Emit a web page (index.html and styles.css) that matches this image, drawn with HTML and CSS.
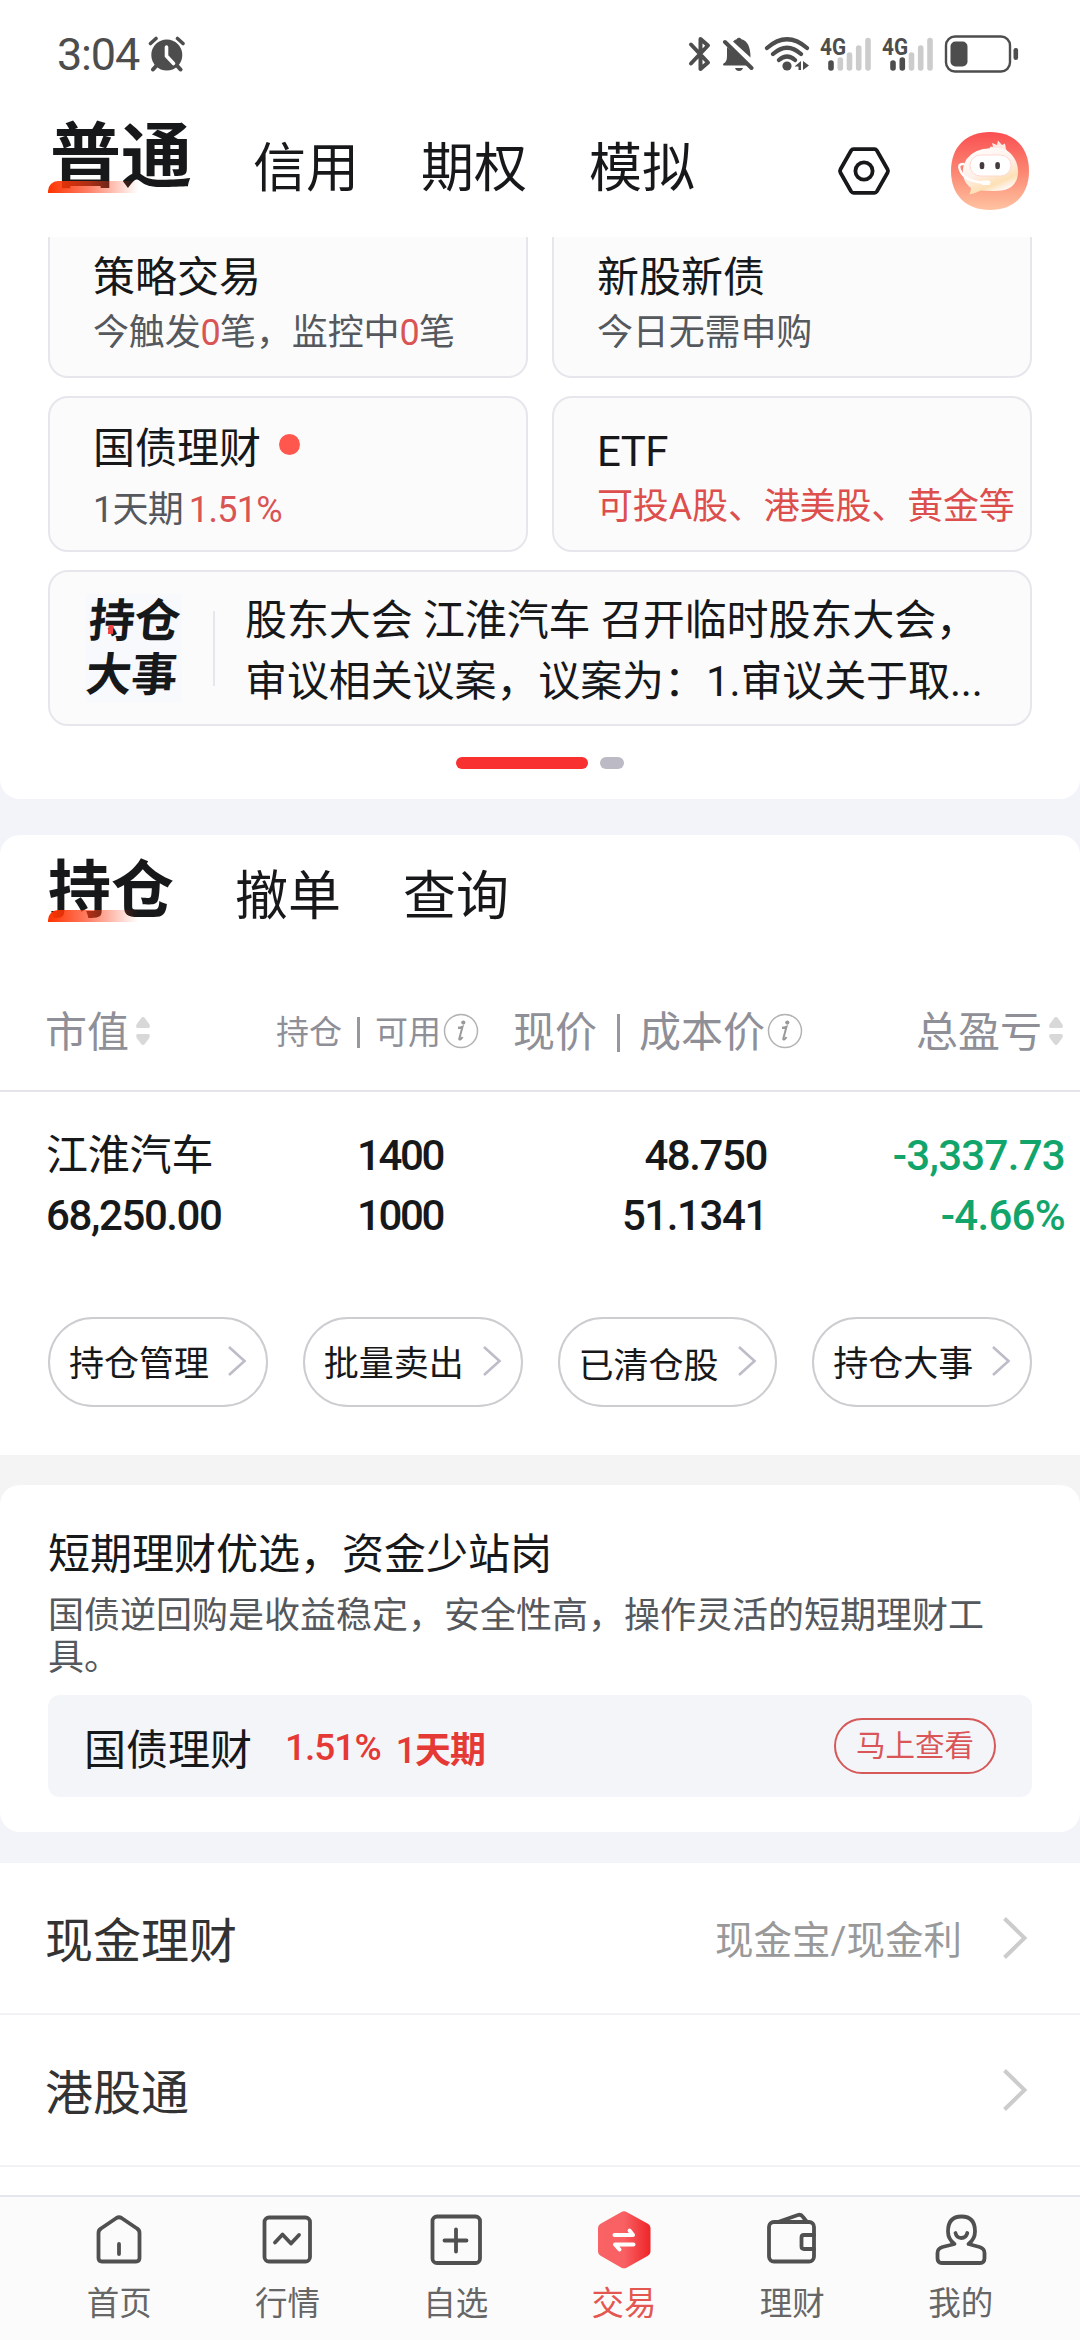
FILE: index.html
```html
<!DOCTYPE html>
<html lang="zh-CN">
<head>
<meta charset="utf-8">
<title>交易</title>
<link rel="stylesheet" href="styles.css">
</head>
<body>
<svg class="defs" width="0" height="0" aria-hidden="true">
  <defs>
    <symbol id="chevron" viewBox="0 0 20 30"><path d="M2 1 17.500 15 2 29" fill="none" stroke="currentColor" stroke-width="2.600"/></symbol>
    <symbol id="chevron-lg" viewBox="0 0 26 42"><path d="M2.500 1.500 22.500 21 2.500 40.500" fill="none" stroke="currentColor" stroke-width="4"/></symbol>
    <symbol id="sort" viewBox="0 0 14 28"><path d="M7 0Q8 0 9 1.200L13.200 7Q15 11 12 11H2Q-1 11 .8 7L5 1.200Q6 0 7 0ZM7 28Q8 28 9 26.800L13.200 21Q15 17 12 17H2Q-1 17 .8 21L5 26.800Q6 28 7 28Z" fill="#d8d8d8"/></symbol>
    <symbol id="info" viewBox="0 0 36 36"><circle cx="18" cy="18" r="16.500" fill="none" stroke="#b3b3b3" stroke-width="1.500"/><circle cx="20.300" cy="9.600" r="2.100" fill="#999"/><path d="M15 14.800Q17.500 14.600 19.500 13.700L16.300 25.600Q16.100 27 17.400 26.300 18.600 25.500 19.500 24M15.200 14.900H18" fill="none" stroke="#999" stroke-width="2"/></symbol>
  </defs>
</svg>

<header class="top">
  <div class="status">
    <span class="time">3:04</span>
    <svg class="alarm" width="38" height="36" viewBox="0 0 38 36"><g fill="none" stroke="#4d4d4d" stroke-linecap="round"><path d="M2.500 7.500 8 2.500M29.500 2.500 35 7.500" stroke-width="3.600"/><path d="m9 29-4 4.500M28.500 29l4 4.500" stroke-width="4"/></g><circle cx="18.800" cy="19" r="15.500" fill="#4d4d4d"/><path d="M18.500 11v9l7 7.500" fill="none" stroke="#fff" stroke-width="3.600" stroke-linecap="round"/></svg>
    <div class="status-icons">
      <svg width="24" height="38" viewBox="0 0 24 38"><path d="M3 9.500 20 27.500 12.500 34V4L20 10.500 3 28.500" fill="none" stroke="#4d4d4d" stroke-width="4" stroke-linecap="round" stroke-linejoin="round"/></svg>
      <svg width="32" height="38" viewBox="0 0 32 38"><path d="M5 12 27 30.500H3Q0 30.500 1.500 28.500 5 27 5 21ZM11 6.500Q13 4.500 14.500 4.200 17 1.500 19.500 4.200 28.500 6.500 28.500 22.500ZM13 33H21Q20 36 17 36T13 33Z" fill="#4d4d4d"/><path d="M3 7 29.500 33" stroke="#4d4d4d" stroke-width="4" stroke-linecap="round"/></svg>
      <svg width="46" height="38" viewBox="0 0 46 38"><g fill="none" stroke="#4d4d4d" stroke-width="4.200" stroke-linecap="round"><path d="M3 13Q23-4.500 43 13M9 19Q23 6.500 37 19M15 25Q23 18 31 25"/></g><circle cx="23" cy="31" r="4.600" fill="#4d4d4d"/><path d="M37 26v9h-2.500v-3.500H30.500ZM39 26v9l6-4.500Z" fill="#4d4d4d"/></svg>
      <svg width="52" height="38" viewBox="0 0 52 38"><text class="net" x="0" y="19.500" textLength="26" lengthAdjust="spacingAndGlyphs">4G</text><g stroke-width="5.600" stroke-linecap="round"><path d="M11 28v5" stroke="#4d4d4d"/><path d="M20.300 25v8M29.500 20v13M38.700 13v20M48 5.500V33" stroke="#ccc"/></g></svg>
      <svg width="52" height="38" viewBox="0 0 52 38"><text class="net" x="0" y="19.500" textLength="26" lengthAdjust="spacingAndGlyphs">4G</text><g stroke-width="5.600" stroke-linecap="round"><path d="M11 28v5M20.300 25v8" stroke="#4d4d4d"/><path d="M29.500 20v13M38.700 13v20M48 5.500V33" stroke="#ccc"/></g></svg>
      <svg width="75" height="38" viewBox="0 0 75 38"><rect x="2" y="1.500" width="64" height="35" rx="9" fill="none" stroke="#4d4d4d" stroke-width="2.400"/><rect x="6.500" y="6.500" width="17" height="25" rx="5" fill="#4d4d4d"/><rect x="69.500" y="13" width="4.600" height="12" rx="2.300" fill="#4d4d4d"/></svg>
    </div>
  </div>
  <nav class="modes">
    <span class="mode active">普通</span>
    <span class="mode">信用</span>
    <span class="mode">期权</span>
    <span class="mode">模拟</span>
    <div class="tools">
      <svg width="54" height="50" viewBox="0 0 54 50"><path d="M16.500 3.200H37.500Q39 3.200 40 4.700L50.500 23.300Q51.500 25 50.500 26.700L40 45.300Q39 46.800 37.500 46.800H16.500Q15 46.800 14 45.300L3.500 26.700Q2.500 25 3.500 23.300L14 4.700Q15 3.200 16.500 3.200Z" fill="none" stroke="#17181a" stroke-width="3.800"/><circle cx="27" cy="25" r="8.600" fill="none" stroke="#17181a" stroke-width="3.800"/></svg>
      <svg width="78" height="78" viewBox="0 0 78 78">
        <defs>
          <linearGradient id="av" x1="0" y1="0" x2="0" y2="1"><stop offset="0" stop-color="#fa4f52"/><stop offset=".5" stop-color="#fb8571"/><stop offset="1" stop-color="#ffc3a1"/></linearGradient>
          <linearGradient id="hd" x1="0" y1="0" x2=".5" y2="1"><stop offset="0" stop-color="#fff"/><stop offset=".55" stop-color="#fff0ea"/><stop offset=".85" stop-color="#fde0b5"/><stop offset="1" stop-color="#fff6f0"/></linearGradient>
        </defs>
        <path d="M39 0C63 0 78 15 78 39S63 78 39 78 0 63 0 39 15 0 39 0Z" fill="url(#av)"/>
        <path d="M39 18Q38 13 42 15L41 11 46 13 47 8.500 51 13 54 11.500 55 17 58 22Z" fill="#ffe7e4"/>
        <path d="M32 17C45 15 55 15 61 23C67 30 69 41 65 49C60 59 50 59 40 59L30 58.500Q25 61 18.500 62.500 20 59.500 20 56C13 51 10 42 13 32Q18 20 32 17Z" fill="url(#hd)"/>
        <rect x="19" y="23" width="41" height="21" rx="10.500" fill="#fff" stroke="#ffd9d2"/>
        <rect x="28.700" y="30" width="4.600" height="7.200" rx="2.300" fill="#443c3c"/><rect x="44.300" y="30" width="4.600" height="7.200" rx="2.300" fill="#443c3c"/>
        <path d="M12 32Q6 32 9.500 39 14 49 31 50.500" fill="none" stroke="#fff" stroke-width="2.400" stroke-linecap="round"/>
        <rect x="30" y="48.500" width="9.500" height="4.600" rx="2.300" fill="#fff"/>
      </svg>
    </div>
  </nav>
</header>

<section class="quick">
  <div class="cards">
    <div class="card cut"><h3>策略交易</h3><p>今触发<em>0</em>笔，监控中<em>0</em>笔</p></div>
    <div class="card cut"><h3>新股新债</h3><p>今日无需申购</p></div>
    <div class="card low"><h3>国债理财<i class="dot"></i></h3><p><i class="day">1天期</i><em>1.51%</em></p></div>
    <div class="card etf"><h3>ETF</h3><p><b>可投A股、港美股、黄金等</b></p></div>
    <div class="card news">
      <div class="brand"><div class="mark"><span class="hold">持仓</span><span>大事</span></div></div>
      <div class="headline">股东大会 江淮汽车 召开临时股东大会，<br>审议相关议案，议案为：1.审议关于取...</div>
    </div>
  </div>
  <div class="pager"><i class="on"></i><i></i></div>
</section>

<section class="holdings">
  <nav class="subtabs"><span class="sub active">持仓</span><span class="sub">撤单</span><span class="sub">查询</span></nav>
  <div class="grid head">
    <div>市值<svg class="sort" width="14" height="28"><use href="#sort"/></svg></div>
    <div class="small">持仓<i class="bar"></i>可用<svg width="36" height="36"><use href="#info"/></svg></div>
    <div>现价<i class="bar"></i>成本价<svg width="36" height="36"><use href="#info"/></svg></div>
    <div>总盈亏<svg class="sort" width="14" height="28"><use href="#sort"/></svg></div>
  </div>
  <div class="grid row">
    <div><span class="name">江淮汽车</span><span>68,250.00</span></div>
    <div class="qty"><span>1400</span><span>1000</span></div>
    <div><span>48.750</span><span>51.1341</span></div>
    <div class="down"><span>-3,337.73</span><span>-4.66%</span></div>
  </div>
  <div class="actions">
    <span class="pill"><span>持仓管理</span><svg width="20" height="30"><use href="#chevron"/></svg></span>
    <span class="pill"><span>批量卖出</span><svg width="20" height="30"><use href="#chevron"/></svg></span>
    <span class="pill"><span class="drop">已清仓股</span><svg width="20" height="30"><use href="#chevron"/></svg></span>
    <span class="pill"><span>持仓大事</span><svg width="20" height="30"><use href="#chevron"/></svg></span>
  </div>
</section>

<div class="band">
<section class="promo">
  <h3>短期理财优选，资金少站岗</h3>
  <p>国债逆回购是收益稳定，安全性高，操作灵活的短期理财工具。</p>
  <div class="offer"><span>国债理财</span><span class="rate">1.51%</span><span class="term">1<b>天期</b></span><span class="go">马上查看</span></div>
</section>
</div>

<section class="links">
  <div class="link"><span>现金理财</span><small>现金宝/现金利</small><svg width="26" height="42"><use href="#chevron-lg"/></svg></div>
  <div class="link"><span>港股通</span><svg width="26" height="42"><use href="#chevron-lg"/></svg></div>
</section>

<nav class="tabbar">
  <div class="tab"><svg width="60" height="60" viewBox="0 0 60 60"><path d="M9.500 23Q9.500 20 12 18.500L27.500 8Q30 6.500 32.500 8L48 18.500Q50.500 20 50.500 23V48Q50.500 51.500 47 51.500H13Q9.500 51.500 9.500 48ZM30 34v10" /></svg><span>首页</span></div>
  <div class="tab"><svg width="60" height="60" viewBox="0 0 60 60"><rect x="7.500" y="7.500" width="45.500" height="44" rx="4.500"/><path d="m18 32.500 7.500-8 8.500 9 8-8.500"/></svg><span>行情</span></div>
  <div class="tab"><svg width="60" height="60" viewBox="0 0 60 60"><rect x="6.500" y="6.500" width="47.500" height="46.500" rx="4.500"/><path d="M18.500 30.500h22M30 19.500v22"/></svg><span>自选</span></div>
  <div class="tab on"><svg width="60" height="60" viewBox="0 0 60 60"><defs><linearGradient id="hx"><stop offset="0" stop-color="#f96365"/><stop offset=".5" stop-color="#f96063"/><stop offset="1" stop-color="#ee2528"/></linearGradient></defs><path d="M27 2.200Q30 .500 33 2.200L53.500 13.500Q56.500 15.200 56.500 18.500V41Q56.500 44.300 53.500 46L33 57.500Q30 59.200 27 57.500L7 46Q4 44.300 4 41V18.500Q4 15.200 7 13.500Z" fill="url(#hx)" stroke="none"/><path d="M20.500 25H39L35.500 20.500M39.500 34.500H21L25.500 39.500" stroke="#fff" stroke-width="4"/></svg><span>交易</span></div>
  <div class="tab"><svg width="60" height="60" viewBox="0 0 60 60"><rect x="7" y="12" width="45" height="39.500" rx="5"/><path d="M16 12 36 5Q39 4 41 7L45 12M52 25H42Q39.500 25 39.500 27.500V36.500Q39.500 39 42 39H52"/></svg><span>理财</span></div>
  <div class="tab"><svg width="60" height="60" viewBox="0 0 60 60"><path d="M23.500 34Q17 29 17 21.500 17 6.500 30.500 6.500T44 21.500Q44 29 37.500 34L48.500 37Q53.500 38.500 53.500 43V48Q53.500 53 49 53H11Q6.500 53 6.500 48V43Q6.500 38.500 11.500 37ZM24.500 23Q25.500 28 30.300 28T36.300 23"/></svg><span>我的</span></div>
</nav>
</body>
</html>
```
FILE: styles.css
```css
* { box-sizing: border-box; }
body {
  margin: 0;
  width: 1080px;
  height: 2340px;
  overflow: hidden;
  display: flex;
  flex-direction: column;
  background: #f3f4f9;
  color: #17181a;
  font-family: Roboto, "Noto Sans CJK SC", sans-serif;
  font-size: 42px;
}
h3, p { margin: 0; font-weight: 400; font-size: 42px; }
em, i { font-style: normal; }
svg { display: block; flex: none; }
.defs { position: absolute; }

.top { height: 237px; flex: none; background: #fff; }
.status { height: 108px; padding: 0 61px 0 57px; display: flex; align-items: center; }
.time { font-size: 45px; letter-spacing: -1.2px; color: #4d4d4d; line-height: 108px; padding-top: 1px; }
.alarm { margin-left: 9px; }
.status-icons { margin-left: auto; display: flex; gap: 10px; }
.net { font: 700 23px Roboto, sans-serif; fill: #4d4d4d; }

.modes { height: 129px; padding: 0 51px 0 48px; display: flex; align-items: flex-start; }
.mode { font-size: 53px; line-height: 122px; margin-right: 62px; }
.mode.active { font-size: 71px; line-height: 98px; margin-right: 61px; padding-left: 2px; }
.active { font-weight: 700; position: relative; }
.active::after {
  content: "";
  position: absolute;
  left: 0;
  top: 73px;
  width: 90px;
  height: 12px;
  border-radius: 10px 0 0 0;
  background: linear-gradient(90deg, #ff3300, rgba(255, 60, 20, .65) 45%, rgba(255, 60, 20, 0));
}
.tools { margin-left: auto; padding-top: 24px; display: flex; align-items: center; gap: 60px; }

.quick { height: 562px; flex: none; background: #fff; border-radius: 0 0 20px 20px; padding: 0 48px; }
.cards { display: grid; grid-template-columns: 480px 480px; grid-template-rows: 141px 156px 156px; column-gap: 24px; row-gap: 18px; }
.card { background: #fbfbfc; border: 2px solid #e6e6ec; border-radius: 20px; padding: 0 0 0 43px; white-space: nowrap; }
.card h3 { line-height: 54px; }
.card p { font-size: 36px; line-height: 46px; color: #55585c; letter-spacing: -.15px; }
.card em { color: #d95555; letter-spacing: -.7px; font-weight: 400; }
.card.cut { border-top: 0; border-radius: 0 0 20px 20px; padding-top: 14px; }
.card.cut p { margin-top: 5px; }
.card.low { padding-top: 24px; }
.card.low p { margin-top: 11px; }
.day { margin-right: 6px; letter-spacing: -.8px; }
.dot { display: inline-block; width: 21px; height: 21px; border-radius: 50%; background: #ff574d; margin-left: 18px; vertical-align: 8px; }
.card.etf { padding-top: 27px; }
.card.etf h3 { letter-spacing: -.6px; }
.card.etf p { margin-top: 5px; }
.card.etf b { color: #dd4f4c; font-weight: 400; }
.card.news { grid-column: span 2; padding: 0 0 0 36px; display: flex; align-items: center; }
.brand { width: 129px; height: 75px; border-right: 2px solid #e6e6ec; display: flex; align-items: center; }
.mark { width: 96px; background: #f8f9fc; font-size: 46px; line-height: 54px; font-weight: 700; letter-spacing: -.5px; display: flex; flex-direction: column; }
.mark span { transform: skewX(-5deg); }
.mark .hold { padding-left: 3px; position: relative; }
.hold::after { content: ""; position: absolute; left: 23px; top: 31px; width: 5px; height: 9px; background: #f04444; }
.headline { margin-left: 30px; line-height: 61.500px; padding-top: 6px; letter-spacing: -.1px; }
.pager { margin-top: 31px; display: flex; justify-content: center; gap: 12px; }
.pager i { width: 24px; height: 12px; border-radius: 6px; background: #bbbac5; }
.pager .on { width: 132px; background: #f93030; }

.holdings { height: 620px; flex: none; margin-top: 36px; background: #fff; border-radius: 20px 20px 0 0; }
.subtabs { height: 157px; padding-left: 48px; display: flex; align-items: flex-start; }
.sub { font-size: 53px; line-height: 125px; margin-right: 62px; }
.sub.active { font-size: 63px; line-height: 112px; margin-right: 61px; }
.sub.active::after { top: 75px; }
.grid { display: grid; grid-template-columns: 220px 223px 324px 1fr; }
.head { height: 100px; border-bottom: 2px solid #e4e4ea; color: #8f8f98; }
.head > div { display: flex; align-items: center; line-height: 82px; height: 82px; white-space: nowrap; }
.head > div:nth-child(1) { padding-left: 45px; }
.head > div:nth-child(2) { padding-left: 56px; }
.head > div:nth-child(3) { padding-left: 70px; }
.head > div:nth-child(4) { padding-left: 149px; }
.head .small { font-size: 33px; }
.head svg { margin-left: 2px; margin-top: -4px; }
.head .sort { margin-left: 7px; }
.bar { flex: none; width: 3px; height: 38px; background: #97979f; margin: 0 19px 0 20px; }
.small .bar { height: 31px; margin: -2px 15px 0; }
.row { padding-top: 34px; }
.row span { display: block; line-height: 60px; font-weight: 500; letter-spacing: -1.400px; text-align: right; }
.row .qty span { letter-spacing: -2.400px; }
.row > div:first-child { padding-left: 46px; }
.row > div:first-child span { text-align: left; }
.row .name { font-weight: 400; letter-spacing: -.2px; }
.down { color: #12a56b; padding-right: 15px; }
.row .down span { letter-spacing: -.7px; }
.actions { margin-top: 71px; padding: 0 48px; display: grid; grid-template-columns: repeat(4, 1fr); gap: 35px; }
.pill { height: 90px; border: 2px solid #cdcdd1; border-radius: 45px; padding-left: 19px; display: flex; align-items: center; gap: 18px; font-size: 35px; color: #17181a; white-space: nowrap; }
.pill span { padding-bottom: 3px; }
.pill .drop { padding-bottom: 0; }
.pill svg { color: #bdbcc8; margin-top: -3px; }

.band { background: linear-gradient(#f4f4f4 60px, #f3f4f9 60px); padding-top: 30px; flex: none; }
.promo { height: 347px; background: #fff; border-radius: 20px; padding: 40px 48px 0; }
.promo h3 { line-height: 60px; }
.promo p { font-size: 36px; line-height: 42px; color: #55585c; margin-top: 10px; }
.offer { margin-top: 16px; height: 102px; border-radius: 12px; background: #f4f5f9; display: flex; align-items: center; padding: 0 36px; }
.rate, .term { font-size: 37px; color: #e53935; font-weight: 500; letter-spacing: -1px; padding-top: 2px; }
.rate { margin-left: 33px; }
.term { margin-left: 15px; font-size: 36px; }
.term b { font-weight: 700; }
.go { margin-left: auto; width: 162px; height: 56px; border: 2px solid #d6595a; border-radius: 28px; color: #d95558; font-size: 29.500px; line-height: 53px; text-align: center; margin-top: -1px; }

.links { height: 332px; flex: none; margin-top: 31px; background: #fff; }
.link { height: 152px; border-bottom: 2px solid #f2f2f4; padding: 0 52px 0 45px; display: flex; align-items: center; font-size: 48px; color: #333; }
.link span, .link small { padding-bottom: 3px; }
.link small { font-size: 38.500px; color: #999; margin-left: auto; }
.link svg { color: #ccc; margin-left: 40px; }
.link span + svg { margin-left: auto; }

.tabbar { height: 145px; flex: none; background: #fbfbfc; border-top: 2px solid #e5e5ec; padding: 13px 35px 0; display: grid; grid-template-columns: repeat(6, 168.300px); }
.tab { display: flex; flex-direction: column; align-items: center; color: #666; }
.tab span { font-size: 32.500px; line-height: 44px; margin-top: 12px; }
.tab svg { fill: none; stroke: #505050; stroke-width: 3.800; stroke-linecap: round; stroke-linejoin: round; }
.tab.on { color: #e45750; }
```
